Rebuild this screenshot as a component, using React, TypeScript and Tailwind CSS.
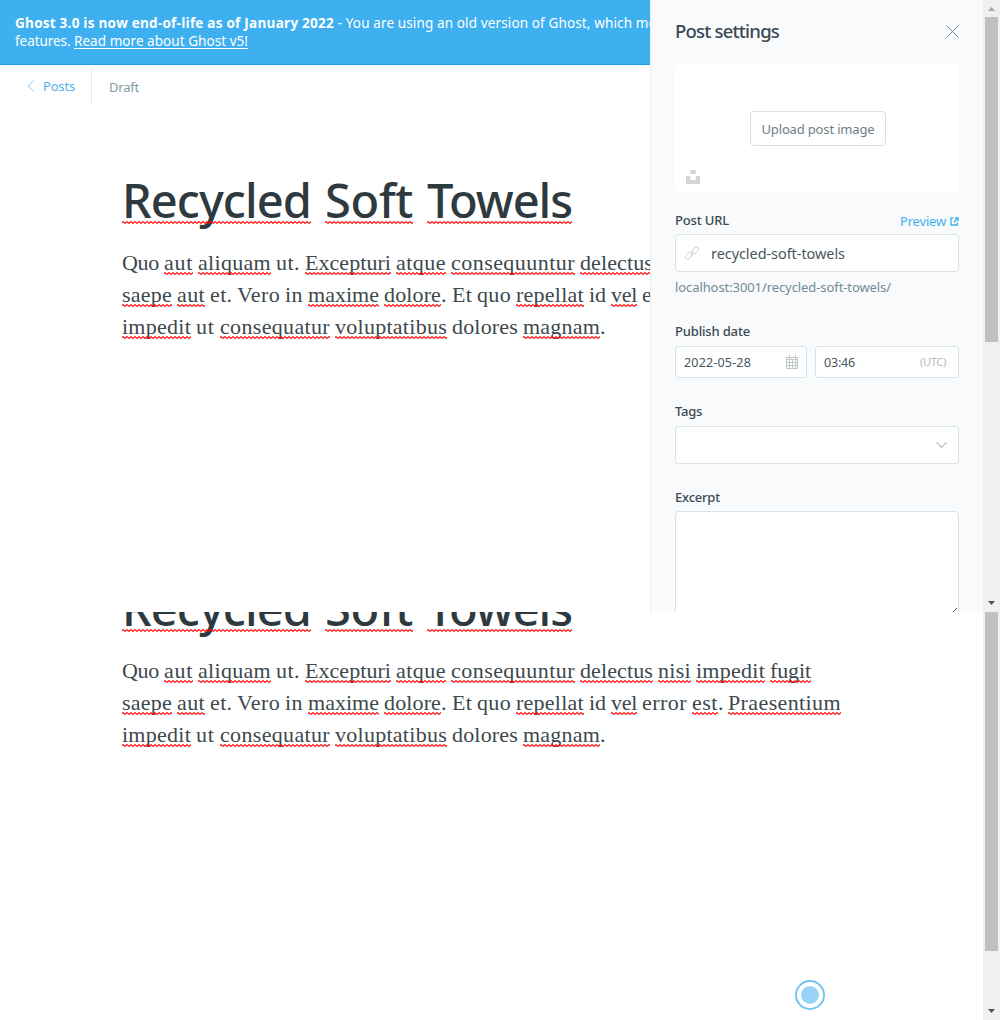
import { useLayoutEffect, useRef, type ReactNode } from "react";

type FitProps = { w: number; className?: string; children: ReactNode };

/** Inline text whose tracking is adjusted so that it spans `w` pixels. */
function Fit({ w, className = "", children }: FitProps) {
  const ref = useRef<HTMLSpanElement>(null);
  useLayoutEffect(() => {
    const el = ref.current;
    if (!el) return;
    el.style.letterSpacing = "0px";
    const natural = el.getBoundingClientRect().width;
    const count = (el.textContent ?? "").length;
    if (count) el.style.letterSpacing = `${(w - natural) / count}px`;
  }, [w]);
  return (
    <span ref={ref} className={`inline-block whitespace-pre ${className}`}>
      {children}
    </span>
  );
}

function Squiggle() {
  return (
    <svg className="absolute bottom-0 left-0 h-[3px] w-full" aria-hidden="true">
      <defs>
        <pattern id="squiggle" width="4" height="3" patternUnits="userSpaceOnUse">
          <path d="M-1 2.4L1 .6L3 2.4L5 .6" fill="none" stroke="#ff0000" strokeWidth="1.05" />
        </pattern>
      </defs>
      <rect width="100%" height="3" fill="url(#squiggle)" />
    </svg>
  );
}

// text, left edge, right edge, flagged by the spell checker, trailing punctuation
type Word = [string, number, number, boolean, string?];

const lines: Word[][] = [
  [
    ["Quo", 122, 159, false], ["aut", 164, 193, true], ["aliquam", 198, 271, true], ["ut.", 276, 300, false],
    ["Excepturi", 305, 391, true], ["atque", 396, 446, true], ["consequuntur", 451, 575, true],
    ["delectus", 580, 653, true], ["nisi", 658, 691, true], ["impedit", 696, 765, true], ["fugit", 770, 811, true],
  ],
  [
    ["saepe", 122, 172, true], ["aut", 177, 205, true], ["et.", 210, 232.5, false], ["Vero", 237, 280, false],
    ["in", 285, 303, false], ["maxime", 308, 379, true], ["dolore", 384, 441, true, "."], ["Et", 452, 472, false],
    ["quo", 477, 511, false], ["repellat", 516, 584, true], ["id", 589, 606, false], ["vel", 611, 637, true],
    ["error", 642, 687, false], ["est", 692, 718, true, "."], ["Praesentium", 728, 841, true],
  ],
  [
    ["impedit", 122, 191, true], ["ut", 196, 214.5, false], ["consequatur", 220, 330, true],
    ["voluptatibus", 335, 447, true], ["dolores", 452, 518, false], ["magnam", 523, 600, true, "."],
  ],
];

function BodyLine({ words }: { words: Word[] }) {
  return (
    <div className="flex h-8 whitespace-nowrap">
      {words.map(([text, left, right, flagged, tail], i) => {
        const next = words[i + 1];
        return (
          <span key={left} className="shrink-0" style={{ width: (next ? next[1] : right + 6) - left }}>
            <span className="relative inline-block h-[28px] leading-8">
              <Fit w={right - left}>{text}</Fit>
              {flagged && <Squiggle />}
            </span>
            {tail}
          </span>
        );
      })}
    </div>
  );
}

const titleWords: [string, number, number][] = [
  ["Recycled", 122, 311],
  ["Soft", 325, 413],
  ["Towels", 427, 572],
];

function PostBody() {
  return (
    <article className="pl-[122px]">
      <h1 className="flex h-[70px] font-['Noto_Sans'] text-[47px] font-medium leading-[65px] text-[#2f3a40]">
        {titleWords.map(([text, left, right], i) => (
          <span key={text} className="shrink-0" style={{ width: (titleWords[i + 1]?.[1] ?? right) - left }}>
            <span className="relative inline-block h-[56px]">
              <Fit w={right - left}>{text}</Fit>
              <Squiggle />
            </span>
          </span>
        ))}
      </h1>
      <div className="mt-[8px] font-['Liberation_Serif',serif] text-[22px] text-[#3c484e]">
        {lines.map((words, i) => (
          <BodyLine key={i} words={words} />
        ))}
      </div>
    </article>
  );
}

type ScrollbarProps = { up?: boolean; thumb: string };

function Scrollbar({ up, thumb }: ScrollbarProps) {
  return (
    <div className="flex w-[17px] shrink-0 flex-col bg-[#f0f0f0]">
      {up && (
        <svg className="h-[17px] w-[17px] shrink-0" viewBox="0 0 17 17">
          <path d="M5 11L8.5 7L12 11Z" fill="#a3a3a3" />
        </svg>
      )}
      <div className={`ml-[2px] w-[13px] bg-[#c1c1c1] ${thumb}`} />
      <svg className="mt-auto h-[17px] w-[17px] shrink-0" viewBox="0 0 17 17">
        <path d="M5 6L8.5 10L12 6Z" fill="#505050" />
      </svg>
    </div>
  );
}

function Label({ w, children }: { w: number; children: ReactNode }) {
  return (
    <div className="h-5 text-[13px] font-medium leading-[18px] text-[#394951]">
      <Fit w={w}>{children}</Fit>
    </div>
  );
}

function SettingsPanel() {
  return (
    <aside className="h-[612px] w-[333px] shrink-0 overflow-hidden border-l border-[#e3eef7] bg-[#f9fafc] pl-6 pr-6 text-[13px]">
      <header className="flex h-[62px] w-[284px] items-center justify-between">
        <h2 className="text-[18.5px] font-medium text-[#394951]">
          <Fit w={104}>Post settings</Fit>
        </h2>
        <svg className="h-[13px] w-[13px]" viewBox="0 0 13 13">
          <path d="M.5 .5L12.5 12.5M12.5 .5L.5 12.5" fill="none" stroke="#77868d" />
        </svg>
      </header>
      <div className="relative mt-px flex h-[130px] w-[284px] items-center justify-center rounded-[3px] bg-white pl-[2px]">
        <button className="h-[35px] w-[136px] rounded-[4px] border border-[#d3e1e7] bg-white pt-[3px] text-[#6d8086]">
          <Fit w={113}>Upload post image</Fit>
        </button>
        <svg className="absolute left-[11px] top-[107px] h-[14px] w-[14px]" viewBox="0 0 14 14">
          <path d="M4.3 0H9.7V4H4.3ZM0 6H4.3V10H9.7V6H14V14H0Z" fill="#d4d5d6" />
        </svg>
      </div>
      <div className="mt-[18px] flex h-[23px] w-[284px] justify-between">
        <Label w={54}>Post URL</Label>
        <a className="flex h-[21px] items-center gap-[4px] text-[#3eb0ef]">
          <Fit w={46}>Preview</Fit>
          <svg className="h-[9px] w-[9px]" viewBox="0 0 9 9" fill="none" stroke="#3eb0ef" strokeWidth="1.3">
            <path d="M3.4 1H1V8H7.4V5.3M5 1H8V4M8 1L3.8 5.2" />
          </svg>
        </a>
      </div>
      <div className="flex h-[38px] w-[284px] items-center rounded-[4px] border border-[#d5e3eb] bg-white pl-[9px] text-[14.5px] text-[#48565c]">
        <svg className="h-[14px] w-[14px]" viewBox="0 0 14 14" fill="none" stroke="#cfdae0" strokeWidth="1">
          <rect x="6.3" y="2.2" width="7.8" height="4.4" rx="2.2" transform="rotate(-45 10.2 4.4)" />
          <rect x="-.1" y="7.4" width="7.8" height="4.4" rx="2.2" transform="rotate(-45 3.8 9.6)" />
          <path d="M5 9L9 5" />
        </svg>
        <Fit w={134} className="ml-[12px] pt-[2px]">recycled-soft-towels</Fit>
      </div>
      <div className="mt-[5px] h-5 leading-5 text-[#738a94]">
        <Fit w={216}>localhost:3001/recycled-soft-towels/</Fit>
      </div>
      <div className="mt-[25px]">
        <Label w={75}>Publish date</Label>
      </div>
      <div className="mt-[4px] flex gap-2 text-[12.5px] text-[#48565c]">
        <div className="flex h-8 w-[132px] items-center justify-between rounded-[3px] border border-[#d5e3eb] bg-white pl-2 pr-2">
          <Fit w={67} className="pt-[3px]">2022-05-28</Fit>
          <svg className="h-[14px] w-[12px]" viewBox="0 0 12 14" fill="none" stroke="#bfc7ca">
            <path d="M.5 2.5H11.5V13.5H.5ZM.5 4.5H11.5M.5 7.5H11.5M.5 10.5H11.5M3.5 0V13.5M6.5 4V13.5M9.5 0V13.5" />
          </svg>
        </div>
        <div className="flex h-8 w-[144px] items-center justify-between rounded-[3px] border border-[#d5e3eb] bg-white pl-2 pr-3">
          <Fit w={31} className="pt-[3px]">03:46</Fit>
          <Fit w={26} className="text-[11px] text-[#aebbc1]">(UTC)</Fit>
        </div>
      </div>
      <div className="mt-6">
        <Label w={27}>Tags</Label>
      </div>
      <div className="mt-1 flex h-[38px] w-[284px] items-center justify-end rounded-[3px] border border-[#d5e3eb] bg-white pr-[11px]">
        <svg className="h-[6px] w-[11px]" viewBox="0 0 11 6">
          <path d="M.5 .3L5.5 5.3L10.5 .3" fill="none" stroke="#a9bac3" strokeWidth="1.1" />
        </svg>
      </div>
      <div className="mt-6">
        <Label w={45}>Excerpt</Label>
      </div>
      <div className="relative mt-[3px] h-[120px] w-[284px] rounded-[4px] border border-[#d5e3eb] bg-white">
        <svg className="absolute right-[1px] top-[96px] h-[4px] w-[4px]" viewBox="0 0 4 4">
          <path d="M0 4L4 0" stroke="#555" />
        </svg>
      </div>
    </aside>
  );
}

export default function App() {
  return (
    <div className="h-[1020px] w-[1000px] overflow-hidden bg-white font-['Noto_Sans',sans-serif]">
      <section className="flex h-[612px]">
        <main className="w-[650px] shrink-0 overflow-hidden">
          <div className="h-[65px] overflow-hidden whitespace-nowrap border-b border-[#1a9eea] bg-[#3eb0ef] pl-[15px] pt-[14px] text-[13.5px] leading-[18px] text-white">
            <div>
              <Fit w={319} className="font-['Open_Sans'] font-bold">Ghost 3.0 is now end-of-life as of January 2022</Fit>
              <Fit w={345}>{" - You are using an old version of Ghost, which means"}</Fit>
            </div>
            <div>
              <Fit w={59}>{"features. "}</Fit>
              <Fit w={174} className="underline underline-offset-2">Read more about Ghost v5!</Fit>
            </div>
          </div>
          <nav className="flex h-[41px] items-center text-[13px]">
            <div className="flex h-[36px] w-[92px] items-center border-r border-[#e0e9ee] pl-[27px] text-[#4fb2ea]">
              <svg className="h-[12px] w-[8px]" viewBox="0 0 8 12">
                <path d="M7 .5L1 6L7 11.5" fill="none" stroke="#8fcdf1" />
              </svg>
              <Fit w={32} className="ml-2 pt-[3px]">Posts</Fit>
            </div>
            <Fit w={30} className="ml-[17px] mt-1 text-[#839aa4]">Draft</Fit>
          </nav>
          <div className="mt-[62px]">
            <PostBody />
          </div>
        </main>
        <SettingsPanel />
        <Scrollbar up thumb="h-[325px]" />
      </section>
      <section className="flex h-[408px]">
        <main className="relative w-[983px] shrink-0 overflow-hidden">
          <div className="-mt-[36px]">
            <PostBody />
          </div>
          <div className="absolute left-[795px] top-[368px] flex h-[30px] w-[30px] items-center justify-center rounded-full border-2 border-[#73c5f2]">
            <div className="h-[18px] w-[18px] rounded-full bg-[#97d3f6]" />
          </div>
        </main>
        <Scrollbar thumb="h-[339px]" />
      </section>
    </div>
  );
}
